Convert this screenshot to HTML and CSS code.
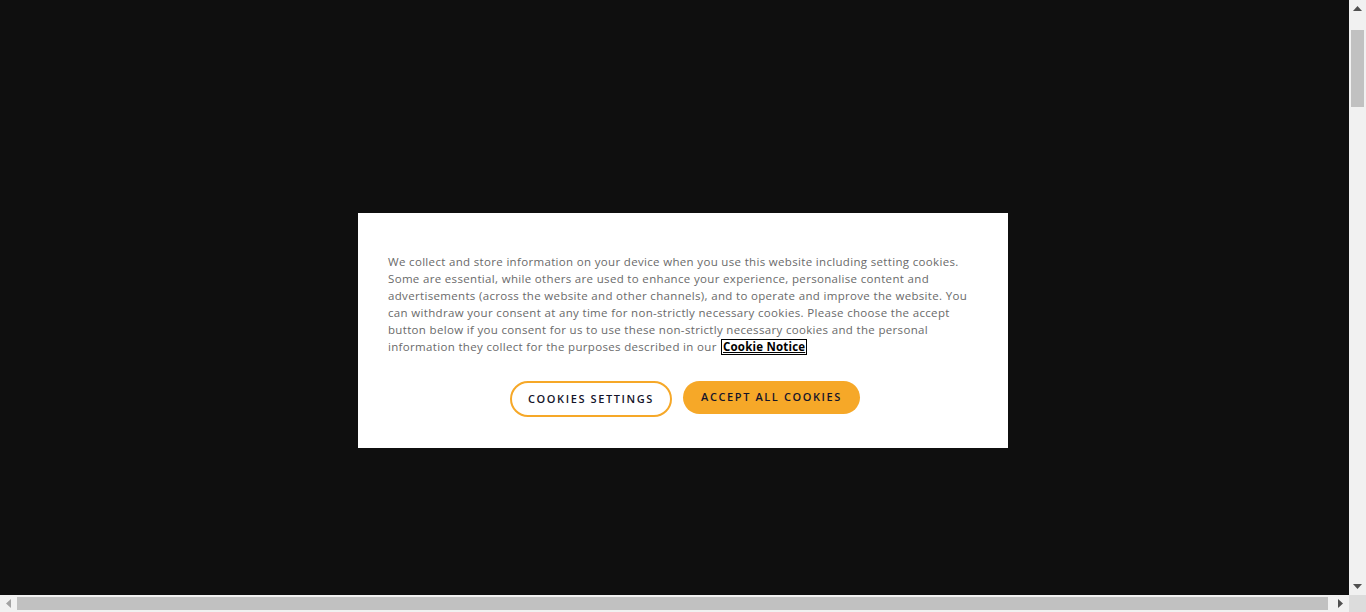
FILE: index.html
```html
<!DOCTYPE html>
<html lang="en">
<head>
<meta charset="utf-8">
<title>Cookie consent</title>
<link rel="stylesheet" href="styles.css">
</head>
<body>
<div class="viewport">
  <main class="content">
    <div class="banner" role="dialog" aria-label="Cookie banner">
      <p class="policy-text">We collect and store information on your device when you use this website including setting cookies. Some are essential, while others are used to enhance your experience, personalise content and advertisements (across the website and other channels), and to operate and improve the website. You can withdraw your consent at any time for non-strictly necessary cookies. Please choose the accept button below if you consent for us to use these non-strictly necessary cookies and the personal information they collect for the purposes described in our <a class="notice-link" href="#">Cookie Notice</a></p>
      <div class="actions">
        <button class="btn btn-settings">COOKIES SETTINGS</button>
        <button class="btn btn-accept">ACCEPT ALL COOKIES</button>
      </div>
    </div>
  </main>
  <div class="vscroll">
    <div class="sb-btn"><svg width="9" height="5" viewBox="0 0 9 5"><path d="M0 5 L4.5 0 L9 5 Z" fill="#505050"/></svg></div>
    <div class="vtrack"><div class="vthumb"></div></div>
    <div class="sb-btn"><svg width="9" height="5" viewBox="0 0 9 5"><path d="M0 0 L4.5 5 L9 0 Z" fill="#505050"/></svg></div>
  </div>
  <div class="hscroll">
    <div class="sb-btn"><svg width="5" height="9" viewBox="0 0 5 9"><path d="M5 0 L0 4.5 L5 9 Z" fill="#a3a3a3"/></svg></div>
    <div class="htrack"><div class="hthumb"></div></div>
    <div class="sb-btn"><svg width="5" height="9" viewBox="0 0 5 9"><path d="M0 0 L5 4.5 L0 9 Z" fill="#505050"/></svg></div>
  </div>
  <div class="corner"></div>
</div>
</body>
</html>
```
FILE: styles.css
```css
html, body {
  margin: 0;
  padding: 0;
  background: #0f0f0f;
}
.viewport {
  display: grid;
  grid-template-columns: 1fr 17px;
  grid-template-rows: 1fr 17px;
  width: 100vw;
  height: 100vh;
  overflow: hidden;
}
.content {
  position: relative;
  background: #0f0f0f;
}
.vscroll {
  display: flex;
  flex-direction: column;
  background: #f1f1f1;
}
.hscroll {
  display: flex;
  background: #f1f1f1;
}
.corner {
  background: #dcdcdc;
}
.sb-btn {
  flex: 0 0 17px;
  width: 17px;
  height: 17px;
  display: flex;
  align-items: center;
  justify-content: center;
}
.vtrack {
  flex: 1;
  padding: 13px 2px 0 2px;
}
.vthumb {
  height: 77px;
  background: #c1c1c1;
}
.htrack {
  flex: 1;
  padding: 2px 4px 2px 0;
}
.hthumb {
  height: 13px;
  background: #c1c1c1;
}
.banner {
  position: absolute;
  top: 213px;
  left: 358px;
  width: 650px;
  height: 235px;
  box-sizing: border-box;
  background: #fff;
  padding: 40px 30px 0 30px;
  font-family: "Open Sans", sans-serif;
}
.policy-text {
  margin: 0;
  font-size: 11.5px;
  line-height: 17px;
  color: #6a6a6a;
  letter-spacing: 0.33px;
}
.notice-link {
  display: inline-block;
  margin-left: 1px;
  padding: 0 1px;
  line-height: 14px;
  border: 1px solid #000;
  color: #000;
  font-weight: 700;
  font-size: 11.5px;
  letter-spacing: 0.2px;
  text-decoration: underline;
}
.actions {
  display: flex;
  justify-content: center;
  align-items: flex-start;
  gap: 11px;
  margin-top: 26px;
  padding-left: 4px;
}
.btn {
  font-family: "Open Sans", sans-serif;
  font-size: 11px;
  font-weight: 600;
  letter-spacing: 1.6px;
  color: #14142a;
  border-radius: 20px;
  cursor: pointer;
  box-sizing: border-box;
  padding: 0 0 2px 0;
}
.btn-settings {
  width: 162px;
  height: 36px;
  background: #fff;
  border: 2px solid #f6a828;
}
.btn-accept {
  width: 177px;
  height: 33px;
  background: #f6a828;
  border: none;
}
```
